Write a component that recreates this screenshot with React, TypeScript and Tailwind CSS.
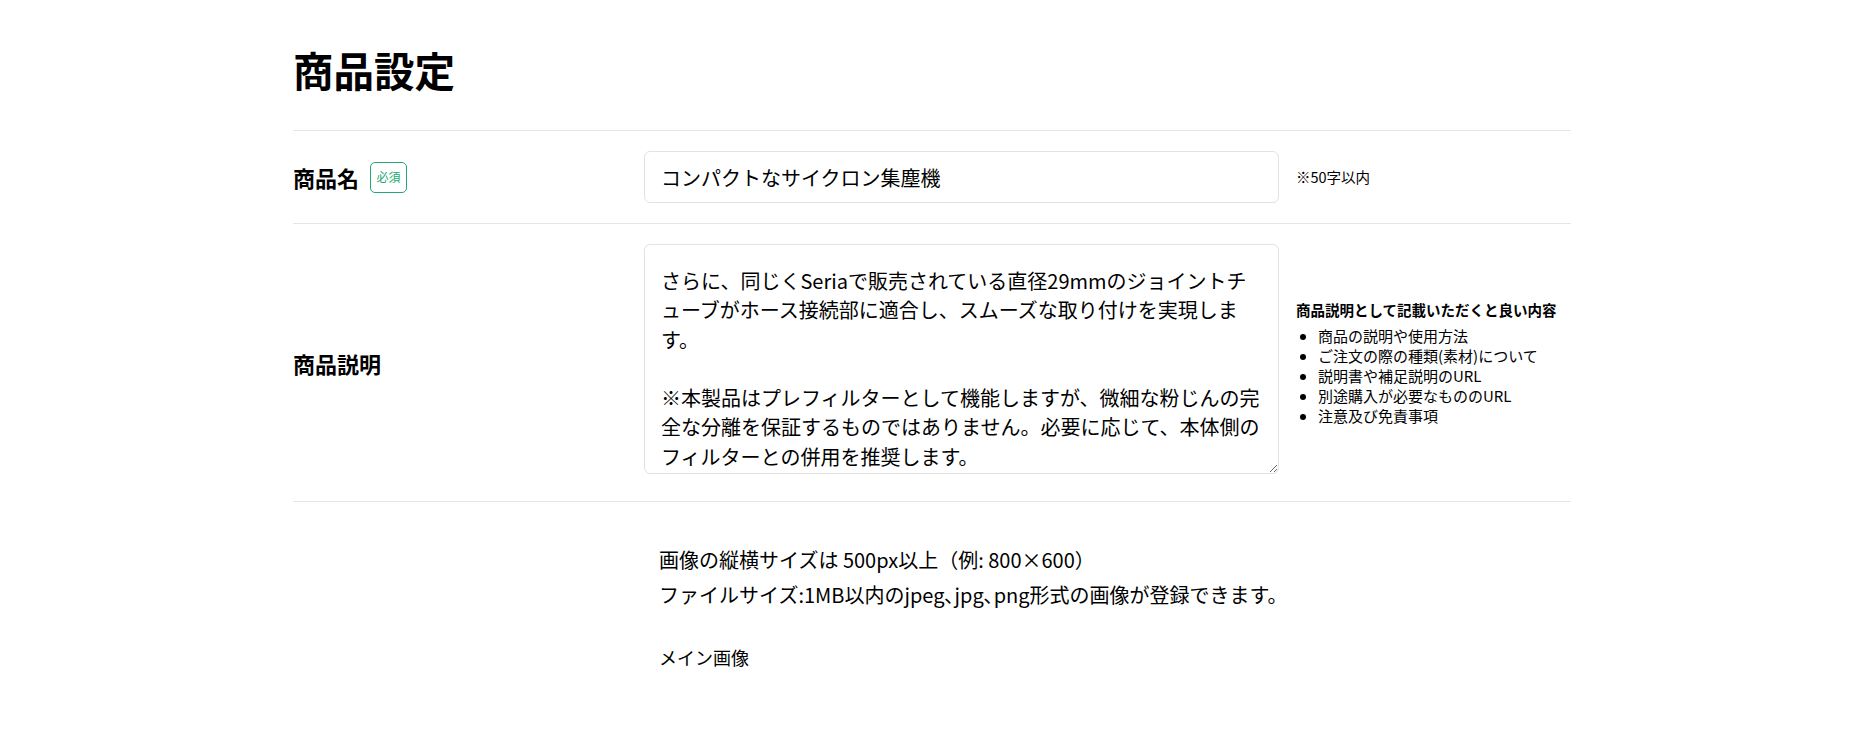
import React from "react";

const textareaValue =
  "さらに、同じくSeriaで販売されている直径29mmのジョイントチューブがホース接続部に適合し、スムーズな取り付けを実現します。\n\n※本製品はプレフィルターとして機能しますが、微細な粉じんの完全な分離を保証するものではありません。必要に応じて、本体側のフィルターとの併用を推奨します。";

export default function App() {
  return (
    <div
      className="min-h-screen bg-white text-black"
      style={{ fontFamily: '"Noto Sans CJK JP", "Noto Sans", sans-serif' }}
    >
      <div className="mx-auto w-[1278px]">
        <div className="border-b border-[#e5e5e5] pt-10 pb-[30px]">
          <h1 className="text-[40.5px] font-bold leading-[60px]">商品設定</h1>
        </div>

        {/* Row 1 */}
        <div className="flex items-center border-b border-[#e5e5e5] py-5">
          <div className="flex w-[351px] shrink-0 items-center">
            <span className="text-[22px] font-bold leading-[30px]">商品名</span>
            <span className="ml-[11px] flex h-[31px] w-[37px] items-center justify-center rounded-[5px] border border-[#22a870] text-[12px] leading-none text-[#22a870]">
              必須
            </span>
          </div>
          <div className="w-[635px] shrink-0">
            <input
              readOnly
              value="コンパクトなサイクロン集塵機"
              className="block h-[52px] w-full rounded-[6px] border border-[#e2e2e2] px-4 text-[20px] text-black outline-none"
            />
          </div>
          <div className="pl-[17px] text-[14.5px] leading-[20px]">※50字以内</div>
        </div>

        {/* Row 2 */}
        <div className="flex items-center border-b border-[#e5e5e5] py-5">
          <div className="w-[351px] shrink-0">
            <span className="text-[22px] font-bold leading-[30px]">商品説明</span>
          </div>
          <div className="h-[237px] w-[635px] shrink-0">
            <textarea
              readOnly
              value={textareaValue}
              className="block h-[230px] w-full resize-y overflow-hidden rounded-[6px] border border-[#e2e2e2] px-4 pt-[21px] pb-0 text-[20px] leading-[29.3px] text-black outline-none"
            />
          </div>
          <div className="pl-[17px]">
            <p className="mb-[6px] text-[14.5px] font-bold leading-[20px]">
              商品説明として記載いただくと良い内容
            </p>
            <ul className="list-disc pl-[22px] text-[15px] leading-[20px]">
              <li>商品の説明や使用方法</li>
              <li>ご注文の際の種類(素材)について</li>
              <li>説明書や補足説明のURL</li>
              <li>別途購入が必要なもののURL</li>
              <li>注意及び免責事項</li>
            </ul>
          </div>
        </div>

        {/* Row 3 */}
        <div className="flex pt-[40px] pb-10">
          <div className="w-[351px] shrink-0" />
          <div className="pl-[15px] text-[20px] leading-[35px]">
            <p>画像の縦横サイズは 500px以上（例: 800×600）</p>
            <p>ファイルサイズ:1MB以内のjpeg､jpg､png形式の画像が登録できます。</p>
            <p className="mt-[28px] text-[18px]">メイン画像</p>
          </div>
        </div>
      </div>
    </div>
  );
}
